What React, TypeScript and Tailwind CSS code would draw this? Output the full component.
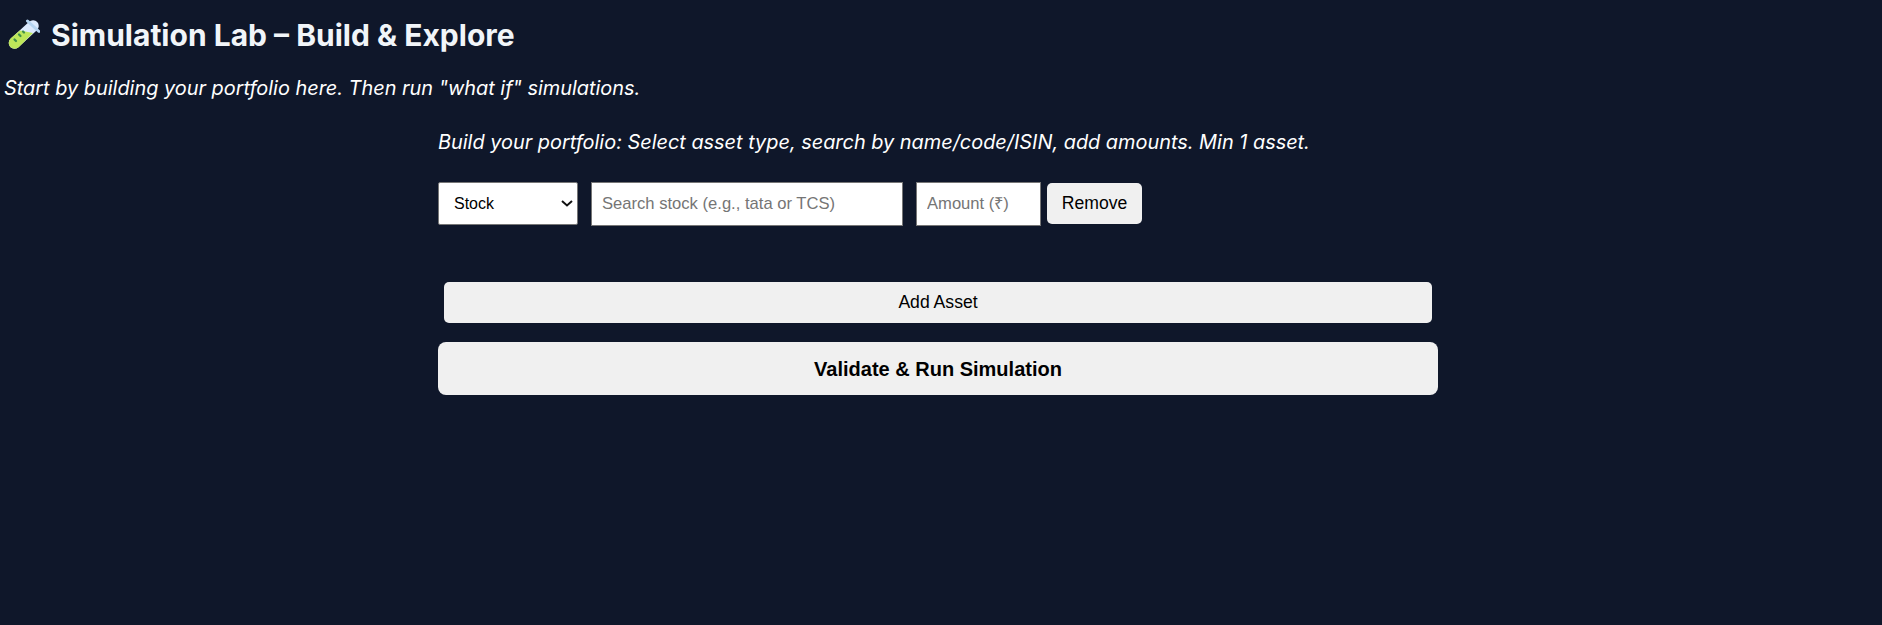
export default function App() {
  return (
    <div className="min-h-screen bg-[#0f172a] pl-1 pr-[10px] text-white font-['Inter',sans-serif]">
      <h1 className="flex items-center gap-[11px] pt-[15px] text-[30px] leading-[40px] font-bold text-[#f1f5f9]">
        <svg width="32" height="32" viewBox="0 0 32 32" className="ml-[4px] shrink-0" aria-hidden="true">
          <line x1="25" y1="7" x2="6.500" y2="24" stroke="#dbeafe" strokeWidth="11.500" strokeLinecap="round" />
          <path d="M12 11.500 L25 14 L11 28 C8 30.500 4 30 2 27.500 C0 25 0.500 21.500 3 19 Z" fill="#bde65a" />
          <path d="M19.500 2 L31 12.500" stroke="#b5d5f2" strokeWidth="3" strokeLinecap="round" />
          <path d="M11 15.500 L12.500 17 M6.500 20.500 L8 22 M15 12.500 L16 13.500" stroke="#3f8f4a" strokeWidth="2.200" strokeLinecap="round" />
        </svg>
        <span>Simulation Lab – Build &amp; Explore</span>
      </h1>
      <p className="mt-[21px] text-[19.9px] leading-[24px] italic">Start by building your portfolio here. Then run "what if" simulations.</p>
      <div className="mx-auto mt-[30px] w-[1000px]">
        <p className="text-[19.9px] leading-[24px] italic">Build your portfolio: Select asset type, search by name/code/ISIN, add amounts. Min 1 asset.</p>
        <div className="mt-[28px] flex items-start font-['Liberation_Sans',sans-serif] text-[16px]">
          <div className="relative">
            <select className="block h-[43px] w-[140px] appearance-none rounded-[2px] border border-[#767676] bg-white px-[15px] text-black">
              <option>Stock</option>
            </select>
            <svg width="12" height="7" viewBox="0 0 12 7" className="pointer-events-none absolute right-[5px] top-[18px]" aria-hidden="true">
              <path d="M1 1 L6 5.500 L11 1" fill="none" stroke="#111111" strokeWidth="2" />
            </svg>
          </div>
          <input className="ml-[13px] h-[44px] w-[312px] border border-[#767676] bg-white px-[10px] text-[16.6px] text-black placeholder:text-[#757575]" placeholder="Search stock (e.g., tata or TCS)" />
          <input className="ml-[13px] h-[44px] w-[125px] border border-[#767676] bg-white px-[10px] text-[16.6px] text-black placeholder:text-[#757575]" placeholder="Amount (₹)" />
          <button className="ml-[6px] mt-[1px] h-[41px] w-[95px] rounded-[5px] bg-[#f0f0f0] text-[17.6px] text-black">Remove</button>
        </div>
        <button className="mx-[6px] mt-[56px] block h-[41px] w-[988px] rounded-[5px] bg-[#f0f0f0] font-['Liberation_Sans',sans-serif] text-[17.6px] text-black">Add Asset</button>
        <button className="mt-[19px] block h-[53px] w-[1000px] rounded-[8px] bg-[#f0f0f0] font-['Liberation_Sans',sans-serif] text-[20px] font-bold text-black">Validate &amp; Run Simulation</button>
      </div>
    </div>
  );
}
